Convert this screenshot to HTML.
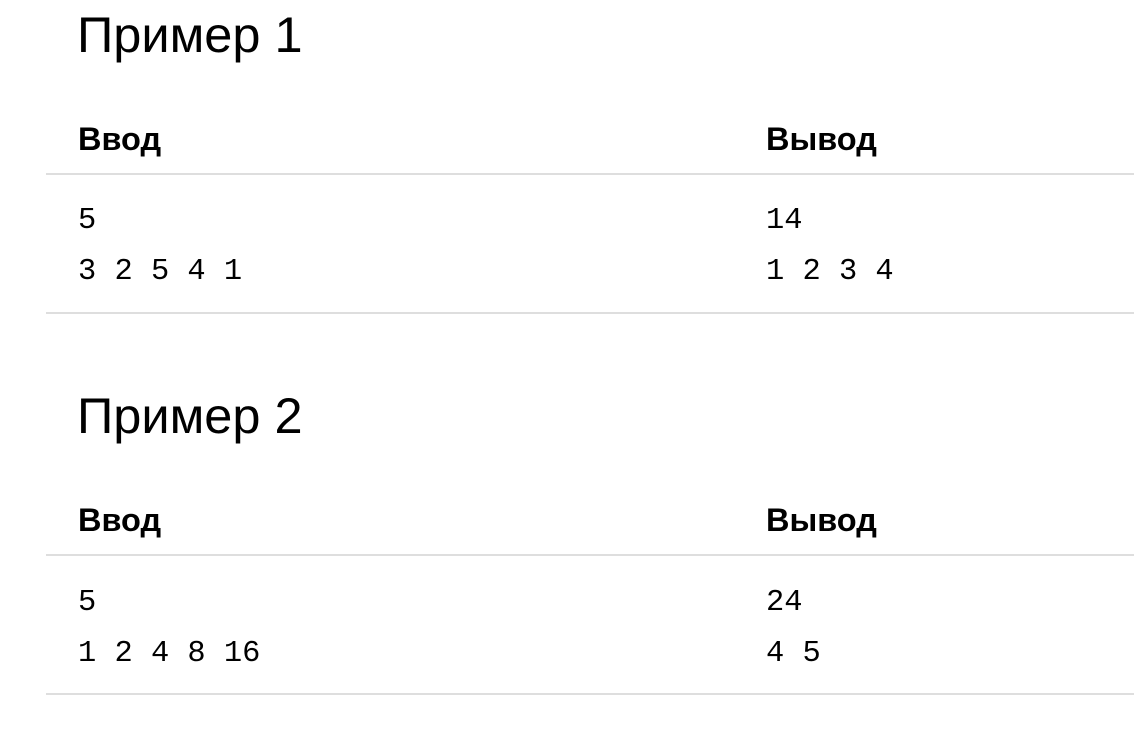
<!DOCTYPE html>
<html><head><meta charset="utf-8"><style>
body{margin:0;width:1134px;height:752px;background:#fff;position:relative;overflow:hidden;color:#000}
.h{position:absolute;left:77px;font:50.5px "Liberation Sans",sans-serif;line-height:1}
.t{position:absolute;font:bold 32.5px "Liberation Sans",sans-serif;line-height:1}
.m{position:absolute;font:30.4px "Liberation Mono",monospace;line-height:1;white-space:pre}
.l{position:absolute;left:46px;right:0;height:2px;background:#dedede}
</style></head><body>
<div class="h" style="top:10px">Пример 1</div>
<div class="t" style="left:78px;top:123px">Ввод</div>
<div class="t" style="left:766px;top:123px">Вывод</div>
<div class="l" style="top:173px"></div>
<div class="m" style="left:78px;top:206px">5</div>
<div class="m" style="left:78px;top:257px">3 2 5 4 1</div>
<div class="m" style="left:766px;top:206px">14</div>
<div class="m" style="left:766px;top:257px">1 2 3 4</div>
<div class="l" style="top:312px"></div>

<div class="h" style="top:391px">Пример 2</div>
<div class="t" style="left:78px;top:504px">Ввод</div>
<div class="t" style="left:766px;top:504px">Вывод</div>
<div class="l" style="top:554px"></div>
<div class="m" style="left:78px;top:588px">5</div>
<div class="m" style="left:78px;top:639px">1 2 4 8 16</div>
<div class="m" style="left:766px;top:588px">24</div>
<div class="m" style="left:766px;top:639px">4 5</div>
<div class="l" style="top:693px"></div>
</body></html>
